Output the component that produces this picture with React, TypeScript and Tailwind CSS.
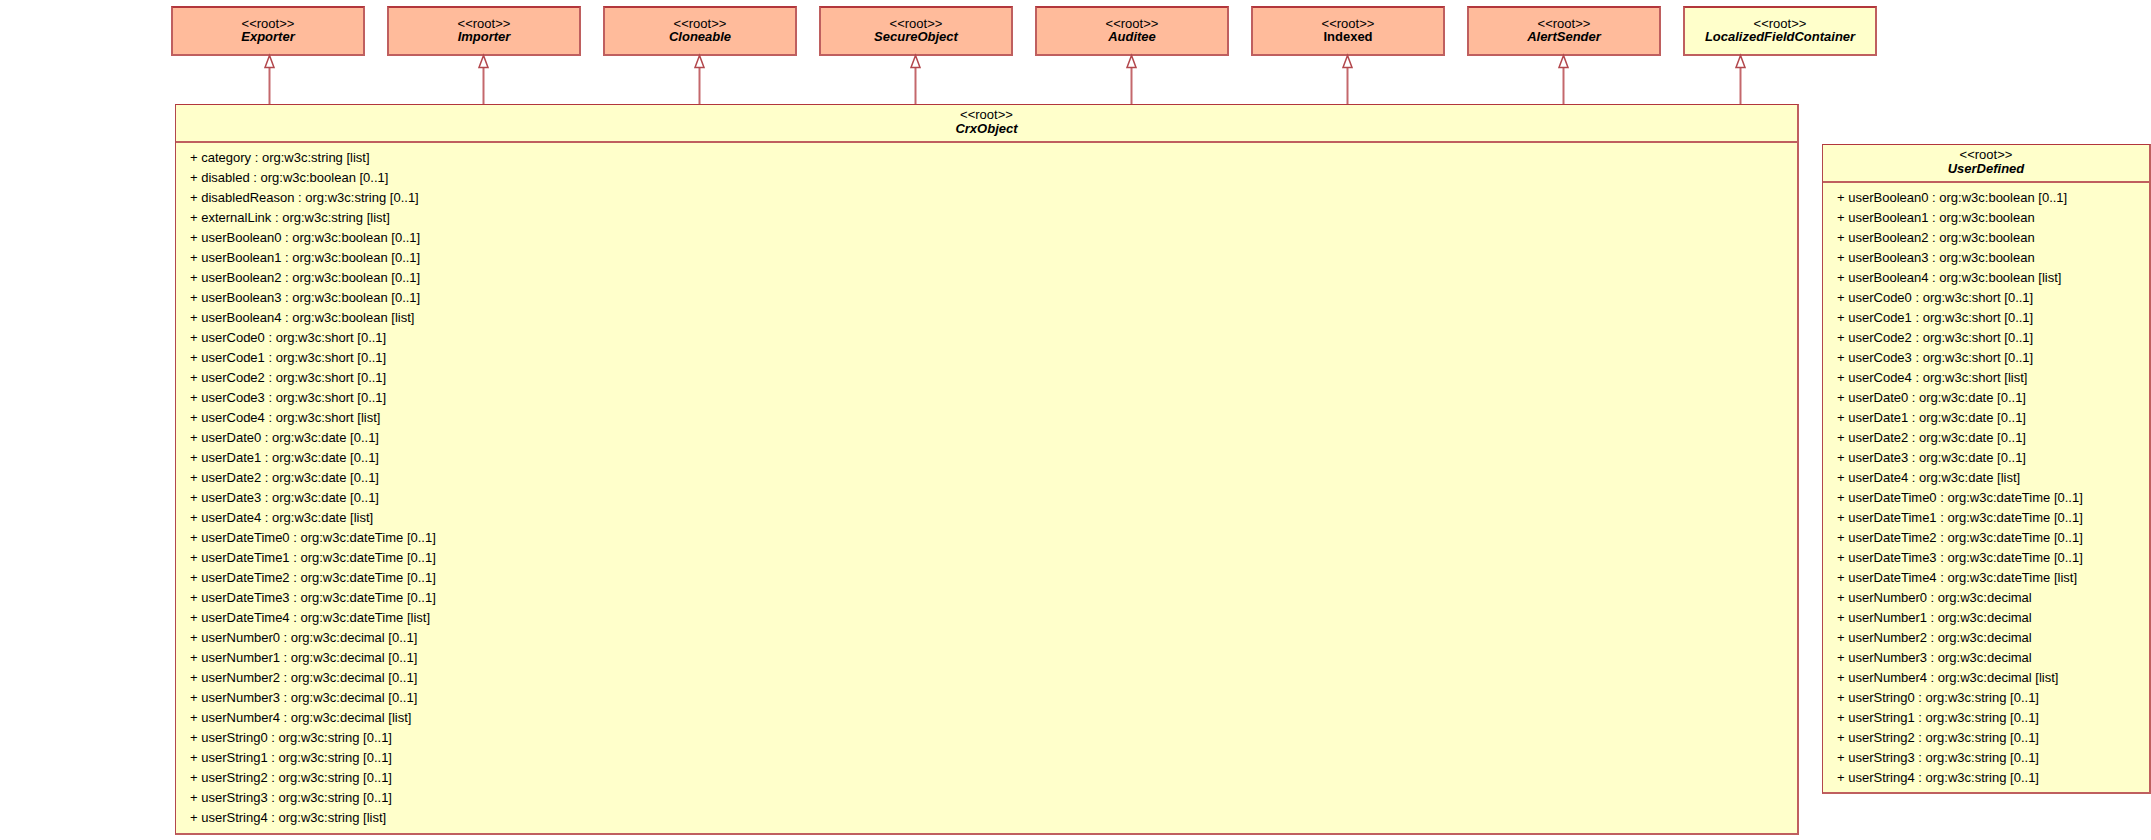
import React from "react";

const crxRows = [
  "category : org:w3c:string [list]",
  "disabled : org:w3c:boolean [0..1]",
  "disabledReason : org:w3c:string [0..1]",
  "externalLink : org:w3c:string [list]",
  "userBoolean0 : org:w3c:boolean [0..1]",
  "userBoolean1 : org:w3c:boolean [0..1]",
  "userBoolean2 : org:w3c:boolean [0..1]",
  "userBoolean3 : org:w3c:boolean [0..1]",
  "userBoolean4 : org:w3c:boolean [list]",
  "userCode0 : org:w3c:short [0..1]",
  "userCode1 : org:w3c:short [0..1]",
  "userCode2 : org:w3c:short [0..1]",
  "userCode3 : org:w3c:short [0..1]",
  "userCode4 : org:w3c:short [list]",
  "userDate0 : org:w3c:date [0..1]",
  "userDate1 : org:w3c:date [0..1]",
  "userDate2 : org:w3c:date [0..1]",
  "userDate3 : org:w3c:date [0..1]",
  "userDate4 : org:w3c:date [list]",
  "userDateTime0 : org:w3c:dateTime [0..1]",
  "userDateTime1 : org:w3c:dateTime [0..1]",
  "userDateTime2 : org:w3c:dateTime [0..1]",
  "userDateTime3 : org:w3c:dateTime [0..1]",
  "userDateTime4 : org:w3c:dateTime [list]",
  "userNumber0 : org:w3c:decimal [0..1]",
  "userNumber1 : org:w3c:decimal [0..1]",
  "userNumber2 : org:w3c:decimal [0..1]",
  "userNumber3 : org:w3c:decimal [0..1]",
  "userNumber4 : org:w3c:decimal [list]",
  "userString0 : org:w3c:string [0..1]",
  "userString1 : org:w3c:string [0..1]",
  "userString2 : org:w3c:string [0..1]",
  "userString3 : org:w3c:string [0..1]",
  "userString4 : org:w3c:string [list]",
];

const userRows = [
  "userBoolean0 : org:w3c:boolean [0..1]",
  "userBoolean1 : org:w3c:boolean",
  "userBoolean2 : org:w3c:boolean",
  "userBoolean3 : org:w3c:boolean",
  "userBoolean4 : org:w3c:boolean [list]",
  "userCode0 : org:w3c:short [0..1]",
  "userCode1 : org:w3c:short [0..1]",
  "userCode2 : org:w3c:short [0..1]",
  "userCode3 : org:w3c:short [0..1]",
  "userCode4 : org:w3c:short [list]",
  "userDate0 : org:w3c:date [0..1]",
  "userDate1 : org:w3c:date [0..1]",
  "userDate2 : org:w3c:date [0..1]",
  "userDate3 : org:w3c:date [0..1]",
  "userDate4 : org:w3c:date [list]",
  "userDateTime0 : org:w3c:dateTime [0..1]",
  "userDateTime1 : org:w3c:dateTime [0..1]",
  "userDateTime2 : org:w3c:dateTime [0..1]",
  "userDateTime3 : org:w3c:dateTime [0..1]",
  "userDateTime4 : org:w3c:dateTime [list]",
  "userNumber0 : org:w3c:decimal",
  "userNumber1 : org:w3c:decimal",
  "userNumber2 : org:w3c:decimal",
  "userNumber3 : org:w3c:decimal",
  "userNumber4 : org:w3c:decimal [list]",
  "userString0 : org:w3c:string [0..1]",
  "userString1 : org:w3c:string [0..1]",
  "userString2 : org:w3c:string [0..1]",
  "userString3 : org:w3c:string [0..1]",
  "userString4 : org:w3c:string [0..1]",
];

const parents = [
  { name: "Exporter", pos: "left-[171px]", bg: "bg-[#ffbb9b]", arrow: 269.5 },
  { name: "Importer", pos: "left-[387px]", bg: "bg-[#ffbb9b]", arrow: 483.5 },
  { name: "Cloneable", pos: "left-[603px]", bg: "bg-[#ffbb9b]", arrow: 699.5 },
  { name: "SecureObject", pos: "left-[819px]", bg: "bg-[#ffbb9b]", arrow: 915.5 },
  { name: "Auditee", pos: "left-[1035px]", bg: "bg-[#ffbb9b]", arrow: 1131.5 },
  { name: "Indexed", upright: true, pos: "left-[1251px]", bg: "bg-[#ffbb9b]", arrow: 1347.5 },
  { name: "AlertSender", pos: "left-[1467px]", bg: "bg-[#ffbb9b]", arrow: 1563.5 },
  { name: "LocalizedFieldContainer", pos: "left-[1683px]", bg: "bg-[#ffffcb]", arrow: 1740.5 },
];

function Title({ name, upright, lineClass }: { name: string; upright?: boolean; lineClass: string }) {
  return (
    <div className={`flex flex-col items-center text-[13px] text-black ${lineClass}`}>
      <span>&lt;&lt;root&gt;&gt;</span>
      <span className={upright ? "font-bold" : "font-bold italic"}>{name}</span>
    </div>
  );
}

function ClassBox({ name, rows, className }: { name: string; rows: string[]; className: string }) {
  return (
    <div className={`absolute flex flex-col border-t border-l border-t-[#b2363c] border-l-[#b2474c] border-r-2 border-b-2 border-r-[#bf5f5f] border-b-[#bf5f5f] bg-[#ffffcb] ${className}`}>
      <div className="h-[38px] border-b-2 border-[#bf5f5f] pt-[3px]">
        <Title name={name} lineClass="leading-[14px]" />
      </div>
      <ul className="flex flex-col pl-[14px] pt-[5px] text-[13px] leading-[20px] text-black">
        {rows.map((r) => (
          <li key={r} className="whitespace-nowrap">+ {r}</li>
        ))}
      </ul>
    </div>
  );
}

export default function App() {
  return (
    <div className="relative h-[840px] w-[2151px] overflow-hidden bg-white font-['Liberation_Sans',Arial,sans-serif]">
      {parents.map((p) => (
        <div
          key={p.name}
          className={`absolute top-[6px] h-[50px] w-[194px] border-2 border-[#bf5f5f] border-t-[#b2363c] pt-[9px] ${p.pos} ${p.bg}`}
        >
          <Title name={p.name} upright={p.upright} lineClass="leading-[13px]" />
        </div>
      ))}
      <svg className="absolute left-0 top-0" width={2151} height={110}>
        {parents.map((p) => (
          <g key={p.name} fill="#ffffff">
            <line x1={p.arrow} y1={67} x2={p.arrow} y2={105} stroke="#c4686c" strokeWidth={2} />
            <path d={`M${p.arrow} 55.5 L${p.arrow - 4.5} 67.5 L${p.arrow + 4.5} 67.5 Z`} stroke="#b2474c" strokeWidth={1.5} />
          </g>
        ))}
      </svg>
      <ClassBox name="CrxObject" rows={crxRows} className="left-[175px] top-[104px] h-[731px] w-[1624px]" />
      <ClassBox name="UserDefined" rows={userRows} className="left-[1822px] top-[144px] h-[650px] w-[329px]" />
    </div>
  );
}
